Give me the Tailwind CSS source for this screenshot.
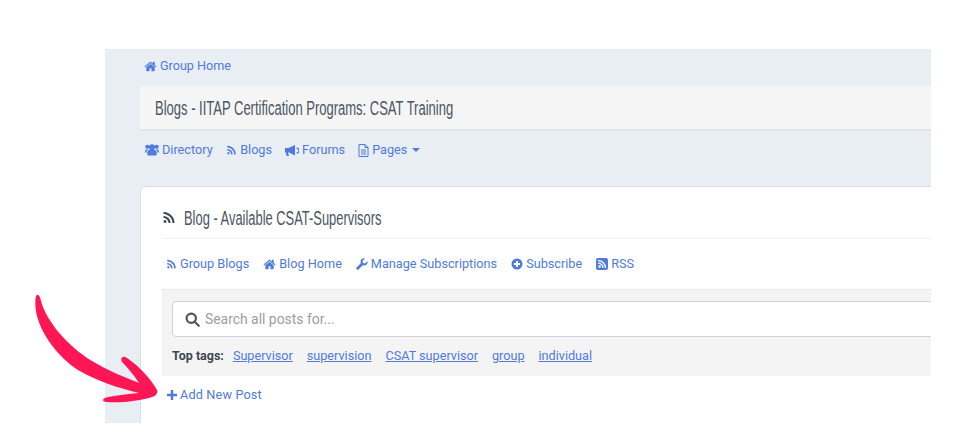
<!DOCTYPE html>
<html><head><meta charset="utf-8"><script src="https://cdn.jsdelivr.net/npm/@tailwindcss/browser@4"></script></head>
<body class="bg-white">
<div class="relative w-[959px] h-[445px] overflow-hidden bg-white font-['Roboto',sans-serif] text-[12.7px] text-[#4f7bdc]">
 <div class="ml-[105px] mt-[49px] w-[826px] h-[374px] bg-[#e9eef5] overflow-hidden absolute top-0 left-0">
  <div class="h-[34px] mb-[3px] pl-[39px] flex items-center gap-[3px]">
   <svg class="w-[13px] h-[13px] fill-current" viewBox="0 0 1792 1792"><path d="M1472 992v480q0 26-19 45t-45 19h-384v-384h-256v384h-384q-26 0-45-19t-19-45v-480q0-1 .5-3t.5-3l575-474 575 474q1 2 1 6zm223-69l-62 74q-8 9-21 11h-3q-13 0-21-7l-692-577-692 577q-12 8-24 7-13-2-21-11l-62-74q-8-10-7-23.500t11-21.500l719-599q32-26 76-26t76 26l244 204v-195q0-14 9-23t23-9h192q14 0 23 9t9 23v408l219 182q10 8 11 21.500t-7 23.500z"/></svg>
   <span class="text-[12.6px]">Group Home</span>
  </div>
  <div class="ml-[35px] h-[45px] bg-[#f5f5f5] border-b-2 border-[#e3e4e6] pl-[15px] flex items-center font-['Liberation_Sans',sans-serif] text-[20px] text-[#4b5563]"><span class="inline-block origin-left scale-x-[0.65] whitespace-nowrap">Blogs - IITAP Certification Programs: CSAT Training</span></div>
  <div class="pl-[40px] h-[38px] flex items-center">
   <svg class="w-[14px] h-[14px] fill-current mr-[3px]" viewBox="0 0 30 26"><circle cx="15" cy="7" r="6.500"/><circle cx="5" cy="6" r="4.500"/><circle cx="25" cy="6" r="4.500"/><path d="M7 25c-1 0-2-1-2-2v-6c0-3 3-4 5-4h10c2 0 5 1 5 4v6c0 1-1 2-2 2z"/><path d="M0 18c0-5 2-7 5-7h3c-3 1-5 3-5 8H1zM30 18c0-5-2-7-5-7h-3c3 1 5 3 5 8h2z"/></svg>
   <span class="mr-[13.500px]">Directory</span>
   <svg class="w-[11px] h-[11px] fill-current mr-[3px]" viewBox="0 0 1792 1792"><path d="M576 1344q0 80-56 136t-136 56-136-56-56-136 56-136 136-56 136 56 56 136zm512 123q2 28-17 48-18 21-47 21h-135q-25 0-43-16.500t-20-41.500q-22-229-184.500-391.500t-391.500-184.500q-25-2-41.500-20t-16.500-43v-135q0-29 21-47 17-17 43-17h5q160 13 306 80.500t259 181.500q114 113 181.500 259t80.500 306zm512 2q2 27-18 47-18 20-46 20h-143q-26 0-44.500-17.500t-19.500-42.500q-12-215-101-408.500t-231.500-336-336-231.500-408.500-102q-25-1-42.500-19.500t-17.500-43.500v-143q0-28 20-46 18-18 44-18h3q262 13 501.500 120t425.500 294q187 186 294 425.500t120 501.500z"/></svg>
   <span class="mr-[13px]">Blogs</span>
   <svg class="w-[14px] h-[13px] fill-current mr-[3px]" viewBox="0 0 28 24"><path d="M0 7h7L20 1v21L8 16H6l2 7H3L2 16H0z"/><path d="M23 7a5 5 0 0 1 0 10" fill="none" stroke="currentColor" stroke-width="2.500"/></svg>
   <span class="mr-[13px]">Forums</span>
   <svg class="w-[11px] h-[13px] mr-[3px]" viewBox="0 0 22 26" fill="none" stroke="currentColor" stroke-width="2"><path d="M2 1h12l6 6v18H2z"/><path d="M14 1v6h6M6 12h10M6 16h10M6 20h10"/></svg>
   <span>Pages</span>
   <span class="ml-[5px] w-0 h-0 border-x-[4px] border-x-transparent border-t-[4px] border-t-current"></span>
  </div>
  <div class="ml-[35px] mt-[17px] w-[900px] h-[260px] bg-white rounded-[6px] border border-[#dcdfe4] pl-[21px] pt-[11px]">
   <div class="h-[41px] border-b border-[#eef0f2] flex items-center text-[#4b5563] font-['Liberation_Sans',sans-serif] text-[20px]">
    <svg class="w-[14px] h-[14px] fill-current mr-[8px] text-[#3f4650]" viewBox="0 0 1792 1792"><path d="M576 1344q0 80-56 136t-136 56-136-56-56-136 56-136 136-56 136 56 56 136zm512 123q2 28-17 48-18 21-47 21h-135q-25 0-43-16.500t-20-41.500q-22-229-184.500-391.500t-391.500-184.500q-25-2-41.500-20t-16.500-43v-135q0-29 21-47 17-17 43-17h5q160 13 306 80.500t259 181.500q114 113 181.500 259t80.500 306zm512 2q2 27-18 47-18 20-46 20h-143q-26 0-44.500-17.500t-19.500-42.500q-12-215-101-408.500t-231.500-336-336-231.500-408.500-102q-25-1-42.500-19.500t-17.500-43.500v-143q0-28 20-46 18-18 44-18h3q262 13 501.500 120t425.500 294q187 186 294 425.500t120 501.500z"/></svg>
    <span class="inline-block origin-left scale-x-[0.645] whitespace-nowrap">Blog - Available CSAT-Supervisors</span>
   </div>
   <div class="h-[51px] pl-[4px] flex items-center border-b border-dotted border-[#d5d7da]">
    <svg class="w-[11px] h-[11px] fill-current mr-[3px]" viewBox="0 0 1792 1792"><path d="M576 1344q0 80-56 136t-136 56-136-56-56-136 56-136 136-56 136 56 56 136zm512 123q2 28-17 48-18 21-47 21h-135q-25 0-43-16.500t-20-41.500q-22-229-184.500-391.500t-391.500-184.500q-25-2-41.500-20t-16.500-43v-135q0-29 21-47 17-17 43-17h5q160 13 306 80.500t259 181.500q114 113 181.500 259t80.500 306zm512 2q2 27-18 47-18 20-46 20h-143q-26 0-44.500-17.500t-19.500-42.500q-12-215-101-408.500t-231.500-336-336-231.500-408.500-102q-25-1-42.500-19.500t-17.500-43.500v-143q0-28 20-46 18-18 44-18h3q262 13 501.500 120t425.500 294q187 186 294 425.500t120 501.500z"/></svg>
    <span class="mr-[14px]">Group Blogs</span>
    <svg class="w-[13px] h-[13px] fill-current mr-[3px]" viewBox="0 0 1792 1792"><path d="M1472 992v480q0 26-19 45t-45 19h-384v-384h-256v384h-384q-26 0-45-19t-19-45v-480q0-1 .5-3t.5-3l575-474 575 474q1 2 1 6zm223-69l-62 74q-8 9-21 11h-3q-13 0-21-7l-692-577-692 577q-12 8-24 7-13-2-21-11l-62-74q-8-10-7-23.500t11-21.500l719-599q32-26 76-26t76 26l244 204v-195q0-14 9-23t23-9h192q14 0 23 9t9 23v408l219 182q10 8 11 21.500t-7 23.500z"/></svg>
    <span class="mr-[14px]">Blog Home</span>
    <svg class="w-[12px] h-[12px] fill-current mr-[3px]" viewBox="0 0 24 24"><path d="M23 6l-5 5-4-1-1-4 5-5c-4-1-8 1-9 5 0 2 0 3 1 4L1 19c-1 1-1 2 0 3l1 1c1 1 2 1 3 0l9-9c1 1 3 1 4 1 4-1 6-5 5-9z"/></svg>
    <span class="mr-[14px]">Manage Subscriptions</span>
    <svg class="w-[12px] h-[12px] fill-current mr-[3px]" viewBox="0 0 24 24"><path fill-rule="evenodd" d="M12 1a11 11 0 1 0 0 22 11 11 0 0 0 0-22zM10 6h4v4h4v4h-4v4h-4v-4H6v-4h4z"/></svg>
    <span class="mr-[14px]">Subscribe</span>
    <svg class="w-[12px] h-[12px] mr-[3px]" viewBox="0 0 24 24"><rect width="24" height="24" rx="4" fill="currentColor"/><circle cx="7" cy="17" r="2.500" fill="#fff"/><path d="M4 10a10 10 0 0 1 10 10M4 5a15 15 0 0 1 15 15" fill="none" stroke="#fff" stroke-width="2.500"/></svg>
    <span>RSS</span>
   </div>
   <div class="bg-[#f4f4f4] h-[86px] pl-[10px] pt-[11px]">
    <div class="h-[36px] bg-white border border-[#cfd2d6] rounded-[4px] flex items-center pl-[12px] text-[13.900px] text-[#9a9ea3]">
     <svg class="w-[15px] h-[15px] mr-[5px] text-[#4b5563]" viewBox="0 0 24 24" fill="none" stroke="currentColor" stroke-width="3.500"><circle cx="10" cy="10" r="7.500"/><path d="M15.500 15.500L22 22" stroke-linecap="round"/></svg>
     <span>Search all posts for...</span>
    </div>
    <div class="mt-[10px] flex items-center text-[12.650px] h-[18px]">
     <span class="font-bold text-[#3f4650] mr-[9px] text-[12.500px]">Top tags:</span>
     <span class="underline mr-[14px]">Supervisor</span>
     <span class="underline mr-[14px]">supervision</span>
     <span class="underline mr-[14px]">CSAT supervisor</span>
     <span class="underline mr-[14px]">group</span>
     <span class="underline">individual</span>
    </div>
   </div>
   <div class="h-[38px] pl-[5px] flex items-center">
    <svg class="w-[10px] h-[10px] fill-current mr-[3px]" viewBox="0 0 10 10"><path d="M3.800 0h2.400v3.800H10v2.400H6.200V10H3.800V6.200H0V3.800h3.800z"/></svg>
    <span class="tracking-[0.15px]">Add New Post</span>
   </div>
  </div>
 </div>
 <svg class="absolute left-0 top-0 pointer-events-none" width="959" height="445" viewBox="0 0 959 445"><path fill="#ff1654" d="M36 296C38 293 40 296 41 301C46 320 66 345 92 361C107 370 124 377 139 383C134 375 127 367 122 362C120 358 123 355 127 358C140 367 150 378 157 390C158 393 156 396 152 397C140 401 122 403 106 402C101 401 103 398 108 397C118 395 128 394 139 393C118 388 97 381 78 370C58 357 42 335 37 316C35 308 35 300 36 296Z"/></svg>
</div>
</body></html>
